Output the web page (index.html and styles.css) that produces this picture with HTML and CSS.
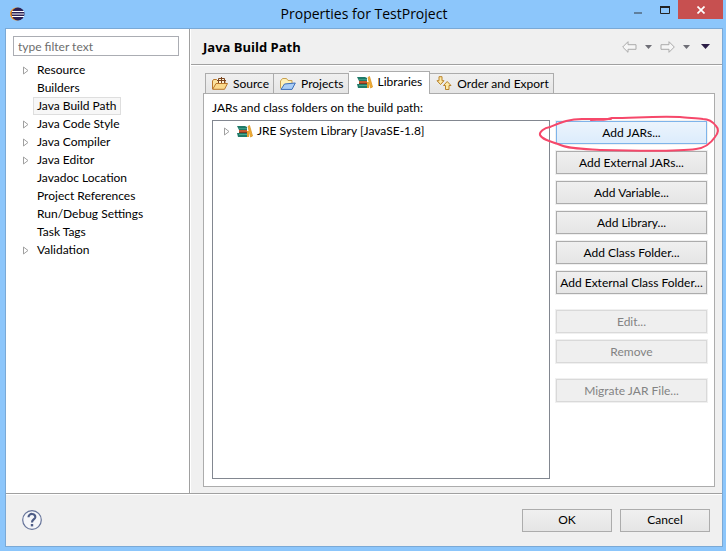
FILE: index.html
```html
<!DOCTYPE html>
<html lang="en">
<head>
    <meta charset="UTF-8">
    <meta name="viewport" content="width=device-width, initial-scale=1.0">
    <title>Properties for TestProject</title>
    <link rel="stylesheet" href="styles.css">
</head>
<body>
    <!-- Shared icons -->
    <svg class="defs" width="0" height="0" aria-hidden="true">
        <symbol id="expand" viewBox="0 0 6 9">
            <path d="M.5 1v7L5 4.500z" fill="#fff" stroke="#a0a0a0"/>
        </symbol>
        <symbol id="books" viewBox="0 0 16 13">
            <path d="M0 1h8l2 1v3H2z" fill="#1f7a68"/>
            <path d="M2 3h8v1H2z" fill="#3c9c86"/>
            <path d="M2 5h8v3H2z" fill="#c4572f"/>
            <path d="M2 7h8v1H2z" fill="#7d3a22"/>
            <path d="M0 8h11v4H1z" fill="#1f7a68"/>
            <path d="M2 9h8v1H2z" fill="#4aa890"/>
            <path d="M11 1.500L12.500.5l3 10.500-2 1z" fill="#f2ae35" stroke="#d9982a" stroke-width=".8"/>
            <path d="M10 6h2v6h-2z" fill="#e8a02c"/>
        </symbol>
    </svg>

    <header class="titlebar">
        <svg class="app-icon" width="15" height="14" viewBox="0 0 15 14">
            <circle cx="6.500" cy="7" r="6.500" fill="#f7941e"/>
            <circle cx="8" cy="7" r="6.500" fill="#2c2255"/>
            <path d="M2 4.500h12M2 7h12M2 9.500h12" stroke="#fff" stroke-width="1.200"/>
        </svg>
        <h1>Properties for TestProject</h1>
        <div class="window-buttons">
            <button type="button" aria-label="Minimize"><svg width="8" height="8"><path d="M0 6h8v2H0z" fill="#5f7f9d"/></svg></button>
            <button type="button" aria-label="Maximize"><svg width="10" height="8"><path d="M.5 1.500h9v6h-9z" fill="none" stroke="#222"/><path d="M0 0h10v2H0z" fill="#222"/></svg></button>
            <button type="button" class="close" aria-label="Close"><svg width="8" height="8"><path d="M.5.500l7 7M7.500.500l-7 7" stroke="#fff" stroke-width="1.700"/></svg></button>
        </div>
    </header>

    <main class="dialog">
        <div class="content">
            <!-- Category tree -->
            <nav class="sidebar">
                <input type="text" class="filter" placeholder="type filter text" aria-label="Filter">
                <ul class="tree">
                    <li><svg class="arrow"><use href="#expand"/></svg><span>Resource</span></li>
                    <li><span>Builders</span></li>
                    <li><span class="selected">Java Build Path</span></li>
                    <li><svg class="arrow"><use href="#expand"/></svg><span>Java Code Style</span></li>
                    <li><svg class="arrow"><use href="#expand"/></svg><span>Java Compiler</span></li>
                    <li><svg class="arrow"><use href="#expand"/></svg><span>Java Editor</span></li>
                    <li><span>Javadoc Location</span></li>
                    <li><span>Project References</span></li>
                    <li><span>Run/Debug Settings</span></li>
                    <li><span>Task Tags</span></li>
                    <li><svg class="arrow"><use href="#expand"/></svg><span>Validation</span></li>
                </ul>
            </nav>

            <section class="page">
                <div class="page-header">
                    <h2>Java Build Path</h2>
                    <div class="history">
                        <button type="button" aria-label="Back"><svg width="15" height="12"><path d="M.7 6L6 .7v3h8v4.600H6v3z" fill="#f6f6f6" stroke="#aaa"/></svg></button>
                        <button type="button" aria-label="Back history"><svg width="7" height="4"><path d="M0 0h7L3.500 4z" fill="#6e6e76"/></svg></button>
                        <button type="button" aria-label="Forward"><svg width="15" height="12"><path d="M14.300 6L9 .7v3H1v4.600h8v3z" fill="#f6f6f6" stroke="#aaa"/></svg></button>
                        <button type="button" aria-label="Forward history"><svg width="7" height="4"><path d="M0 0h7L3.500 4z" fill="#6e6e76"/></svg></button>
                        <button type="button" class="menu" aria-label="Menu"><svg width="9" height="5"><path d="M0 0h9L4.500 5z" fill="#2b1d45"/></svg></button>
                    </div>
                </div>

                <div class="page-body">
                    <div class="tabs" role="tablist">
                        <button type="button" class="tab" role="tab">
                            <svg width="16" height="13" viewBox="0 0 16 13">
                                <path d="M.5 12V4l1-1.500h3L6 4h7v2" fill="#fbe3a0" stroke="#b8762a"/>
                                <path d="M6.500 1.500h6v5h-6z" fill="#fff3d8" stroke="#7a4520"/>
                                <path d="M9.500 0v7M5 3.500h9" stroke="#7a4520"/>
                                <path d="M.7 12.300L4 6.500h11.500l-3 5.800z" fill="#fbd98b" stroke="#b8762a"/>
                            </svg>
                            <span>Source</span>
                        </button>
                        <button type="button" class="tab" role="tab">
                            <svg width="16" height="12" viewBox="0 0 16 12">
                                <path d="M.5 10.500V3l2-2.500h4L8 2.500h4v4" fill="#fdf0b8" stroke="#c8a050"/>
                                <path d="M1 11.400L4.500 6l10.800-1-3.300 6.400z" fill="#a9cdf6" stroke="#3c6eb8"/>
                            </svg>
                            <span>Projects</span>
                        </button>
                        <button type="button" class="tab active" role="tab" aria-selected="true">
                            <svg width="16" height="13"><use href="#books"/></svg>
                            <span>Libraries</span>
                        </button>
                        <button type="button" class="tab" role="tab">
                            <svg width="16" height="15" viewBox="0 0 16 15">
                                <path d="M3 .7h3v4h2L4.500 8.500 1 4.700h2z" fill="#fde9a5" stroke="#b9822a"/>
                                <path d="M9.500 13.500v-4h-2L11.200 5.500 15 9.500h-2v4z" fill="#fde9a5" stroke="#b9822a"/>
                            </svg>
                            <span>Order and Export</span>
                        </button>
                    </div>

                    <div class="panel" role="tabpanel">
                        <p class="caption" id="caption">JARs and class folders on the build path:</p>
                        <div class="panel-row">
                            <ul class="library-list" aria-labelledby="caption">
                                <li>
                                    <svg class="arrow"><use href="#expand"/></svg>
                                    <svg width="16" height="13"><use href="#books"/></svg>
                                    <span>JRE System Library [JavaSE-1.8]</span>
                                </li>
                            </ul>
                            <div class="actions">
                                <div class="marked">
                                    <button type="button" class="btn hot">Add JARs...</button>
                                    <!-- Hand drawn red circle -->
                                    <svg class="mark" width="184" height="40" viewBox="0 0 184 40">
                                        <path d="M53 5C60 4 66 6 74 3C95 3 116 1 142 2C150 3 159 3 165 4C171 4 175 7 178 11C181 14 181 17 177 22C173 28 167 33 158 34C137 37 100 36 62 35C46 34 30 34 20 29C10 26 4 24 2 20C1 17 6 13 12 12C22 8 30 4 44 4C56 4 64 4 73 4" fill="none" stroke="#f6486a" stroke-width="2" stroke-linecap="round" stroke-linejoin="round"/>
                                    </svg>
                                </div>
                                <button type="button" class="btn">Add External JARs...</button>
                                <button type="button" class="btn">Add Variable...</button>
                                <button type="button" class="btn">Add Library...</button>
                                <button type="button" class="btn">Add Class Folder...</button>
                                <button type="button" class="btn">Add External Class Folder...</button>
                                <button type="button" class="btn group" disabled>Edit...</button>
                                <button type="button" class="btn" disabled>Remove</button>
                                <button type="button" class="btn group" disabled>Migrate JAR File...</button>
                            </div>
                        </div>
                    </div>
                </div>
            </section>
        </div>

        <footer class="footer">
            <button type="button" class="help" aria-label="Help">
                <svg width="20" height="20" viewBox="0 0 20 20">
                    <circle cx="10" cy="10" r="9.300" fill="#f5f6f9" stroke="#66749a" stroke-width="1.200"/>
                    <path d="M6.500 7.200C6.500 2.800 13.700 3 13.300 7.200C13 9.500 10 9.600 10 12.400" fill="none" stroke="#4d5c86" stroke-width="2.200"/>
                    <path d="M8.800 14h2.400v2.400H8.800z" fill="#4d5c86"/>
                </svg>
            </button>
            <button type="button" class="btn">OK</button>
            <button type="button" class="btn">Cancel</button>
        </footer>
    </main>
</body>
</html>
```

FILE: styles.css
```css
* {
    box-sizing: border-box;
}

body {
    font-family: Lato, "Open Sans", sans-serif;
    font-size: 12px;
    line-height: 18px;
    color: #000;
    margin: 0;
    padding: 0 3px 4px 5px;
    background-color: #8cc6fb;
    display: flex;
    flex-direction: column;
    min-height: 100vh;
}

h1, h2, p, ul {
    margin: 0;
    padding: 0;
}

h1, h2 {
    font-family: "Open Sans", sans-serif;
}

ul {
    list-style: none;
}

button, input {
    font: inherit;
    color: inherit;
    padding: 0;
}

svg {
    flex: none;
    display: block;
}

.defs {
    position: absolute;
}

/* Title bar */
.titlebar {
    display: grid;
    grid-template-columns: 1fr auto 1fr;
    height: 28px;
}

.titlebar h1 {
    font-size: 14px;
    font-weight: normal;
    line-height: 28px;
}

.app-icon {
    margin: 7px 0 0 5px;
}

.window-buttons {
    display: flex;
    justify-content: flex-end;
    height: 19px;
}

.window-buttons button {
    width: 27px;
    display: flex;
    align-items: center;
    justify-content: center;
    background: none;
    border: none;
}

.window-buttons .close {
    width: 45px;
    background-color: #c75050;
}

/* Dialog */
.dialog {
    flex: 1;
    display: flex;
    flex-direction: column;
    border: 1px solid #7aa9d6;
    background-color: #f0f0f0;
}

.content {
    flex: 1;
    display: flex;
    border-bottom: 1px solid #a0a0a0;
}

.sidebar {
    width: 184px;
    padding: 7px 10px 0 7px;
    background-color: #fff;
    border-right: 1px solid #a0a0a0;
}

.filter {
    display: block;
    width: 100%;
    height: 20px;
    padding: 0 4px;
    border: 1px solid #abadb3;
    background-color: #fff;
}

.filter::placeholder {
    color: #6d6d6d;
    opacity: 1;
}

.tree {
    padding: 5px 0 0 10px;
}

.tree li {
    display: flex;
    align-items: center;
    height: 18px;
}

.tree span {
    padding: 0 3px;
    border: 1px solid transparent;
    line-height: 16px;
    white-space: nowrap;
}

.tree li > span:first-child {
    margin-left: 10px;
}

.tree .selected {
    background-color: #f7f7f7;
    border-color: #dedede;
}

.arrow {
    width: 6px;
    height: 9px;
    margin-right: 4px;
}

.page {
    flex: 1;
    display: flex;
    flex-direction: column;
    border-left: 1px solid #fff;
}

.page-header {
    display: flex;
    align-items: center;
    justify-content: space-between;
    height: 36px;
    padding: 0 12px;
    border-bottom: 1px solid #a0a0a0;
}

.page-header h2 {
    font-size: 13px;
    font-weight: bold;
}

.history {
    display: flex;
    align-items: center;
    gap: 8px;
}

.history button {
    background: none;
    border: none;
}

.history .menu {
    margin-left: 3px;
}

.page-body {
    flex: 1;
    display: flex;
    flex-direction: column;
    padding: 5px 7px 6px 12px;
    border-top: 1px solid #fff;
}

/* Tabs */
.tabs {
    display: flex;
    align-items: flex-end;
    padding-left: 2px;
}

.tab {
    display: flex;
    align-items: center;
    gap: 5px;
    height: 20px;
    padding: 0 4px 0 6px;
    border: 1px solid #acacac;
    border-bottom: none;
    border-left: none;
    background: linear-gradient(#f0f0f0, #e5e5e5);
    white-space: nowrap;
}

.tab:first-child {
    border-left: 1px solid #acacac;
}

.tab.active {
    height: 23px;
    margin-bottom: -1px;
    padding: 0 7px 2px 8px;
    background: #fff;
    z-index: 1;
}

.panel {
    flex: 1;
    display: flex;
    flex-direction: column;
    padding: 5px 7px 7px 8px;
    border: 1px solid #acacac;
    background-color: #fff;
}

.caption {
    height: 21px;
}

.panel-row {
    flex: 1;
    display: flex;
    gap: 6px;
}

.library-list {
    flex: 1;
    border: 1px solid #828790;
    padding: 1px 0 0 11px;
}

.library-list li {
    display: flex;
    align-items: center;
    height: 18px;
}

.library-list .arrow {
    margin-right: 7px;
}

.library-list span {
    margin-left: 4px;
}

.actions {
    display: flex;
    flex-direction: column;
    gap: 7px;
    width: 151px;
    padding-top: 1px;
}

.btn {
    height: 23px;
    border: 1px solid #acacac;
    background: linear-gradient(#f0f0f0, #e5e5e5);
    box-shadow: 0 0 0 1px #f0f0f0;
    line-height: 20px;
    white-space: nowrap;
}

.btn:disabled {
    color: #838383;
    border-color: #d9d9d9;
    background: #efefef;
}

.btn.group {
    margin-top: 9px;
}

.marked {
    position: relative;
    display: flex;
}

.marked .btn {
    flex: 1;
}

.btn.hot {
    border-color: #7eb4ea;
    background: linear-gradient(#ecf4fc, #dcecfc);
}

/* The circle lies over the button */
.mark {
    position: absolute;
    left: -18px;
    top: -6px;
    pointer-events: none;
}

/* Footer */
.footer {
    display: flex;
    align-items: center;
    gap: 8px;
    height: 52px;
    padding: 0 12px 1px 16px;
    border-top: 1px solid #fff;
}

.footer .btn {
    width: 90px;
}

.help {
    margin-right: auto;
    background: none;
    border: none;
}
```
